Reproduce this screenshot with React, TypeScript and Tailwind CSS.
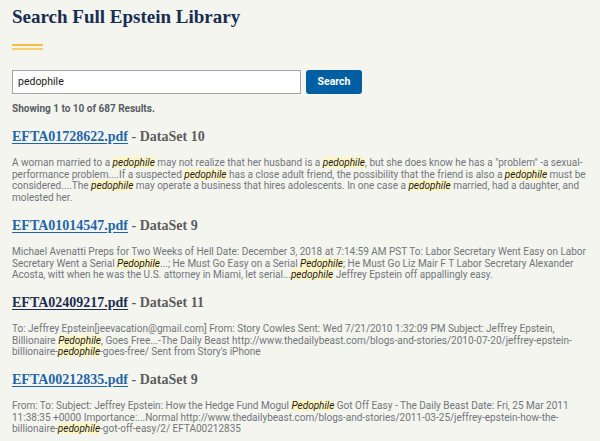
import React from "react";

const serif = { fontFamily: '"Liberation Serif", "Times New Roman", serif' };

function Hl({ children }: { children: React.ReactNode }) {
  return <em className="bg-[#fff6c6] text-[#1b1b1b] italic">{children}</em>;
}

type Result = {
  file: string;
  set: string;
  visited?: boolean;
  body: React.ReactNode;
};

const results: Result[] = [
  {
    file: "EFTA01728622.pdf",
    set: "DataSet 10",
    body: (
      <>
        A woman married to a <Hl>pedophile</Hl> may not realize that her husband is a <Hl>pedophile</Hl>, but she
        does know he has a "problem" -a sexual-performance problem....If a suspected <Hl>pedophile</Hl> has a close
        adult friend, the possibility that the friend is also a <Hl>pedophile</Hl> must be considered....The{" "}
        <Hl>pedophile</Hl> may operate a business that hires adolescents. In one case a <Hl>pedophile</Hl> married,
        had a daughter, and molested her.
      </>
    ),
  },
  {
    file: "EFTA01014547.pdf",
    set: "DataSet 9",
    body: (
      <>
        Michael Avenatti Preps for Two Weeks of Hell Date: December 3, 2018 at 7:14:59 AM PST To: Labor Secretary
        Went Easy on Labor Secretary Went a Serial <Hl>Pedophile</Hl>...; He Must Go Easy on a Serial{" "}
        <Hl>Pedophile</Hl>; He Must Go Liz Mair F T Labor Secretary Alexander Acosta, witt when he was the U.S.
        attorney in Miami, let serial...<Hl>pedophile</Hl> Jeffrey Epstein off appallingly easy.
      </>
    ),
  },
  {
    file: "EFTA02409217.pdf",
    set: "DataSet 11",
    visited: true,
    body: (
      <>
        To: Jeffrey Epstein[jeevacation@gmail.com] From: Story Cowles Sent: Wed 7/21/2010 1:32:09 PM Subject:
        Jeffrey Epstein, Billionaire <Hl>Pedophile</Hl>, Goes Free...-The Daily Beast
        http://www.thedailybeast.com/blogs-and-stories/2010-07-20/jeffrey-epstein-billionaire-<Hl>pedophile</Hl>
        -goes-free/ Sent from Story's iPhone
      </>
    ),
  },
  {
    file: "EFTA00212835.pdf",
    set: "DataSet 9",
    body: (
      <>
        From: To: Subject: Jeffrey Epstein: How the Hedge Fund Mogul <Hl>Pedophile</Hl> Got Off Easy - The Daily
        Beast Date: Fri, 25 Mar 2011 11:38:35 +0000 Importance:...Normal
        http://www.thedailybeast.com/blogs-and-stories/2011-03-25/jeffrey-epstein-how-the-billionaire-
        <Hl>pedophile</Hl>-got-off-easy/2/ EFTA00212835
      </>
    ),
  },
];

export default function App() {
  return (
    <div
      className="min-h-screen w-full bg-[#f5f5f0] px-3 pt-[5px] pb-4"
      style={{ fontFamily: 'Roboto, "Liberation Sans", Arial, sans-serif' }}
    >
      <h1 className="text-[19px] leading-[24px] font-bold text-[#162e51]" style={serif}>
        Search Full Epstein Library
      </h1>
      <div className="mt-[15px] flex flex-col gap-[2px] w-[31px]">
        <div className="h-[2px] bg-[#f2c044]" />
        <div className="h-[2px] bg-[#f7cf6f]" />
      </div>
      <div className="mt-[20px] flex items-center gap-[5px]">
        <div className="h-[24px] w-[289px] border border-[#a3a7aa] bg-white flex items-center px-[5px] text-[10.5px] text-[#1b1b1b]">
          pedophile
        </div>
        <button className="h-[24px] w-[56px] rounded-[3px] bg-[#005ea2] text-white text-[10.5px] font-bold">
          Search
        </button>
      </div>
      <div className="mt-[8px] text-[10px] leading-[14px] font-bold text-[#565c65]">
        Showing 1 to 10 of 687 Results.
      </div>
      <div className="mt-[11px] flex flex-col gap-[12px]">
        {results.map((r) => (
          <div key={r.file}>
            <div className="text-[14px] leading-[20px] font-bold" style={serif}>
              <a
                href="#"
                className={
                  r.visited
                    ? "text-[#1c2d4f] underline underline-offset-[2px]"
                    : "text-[#1f66a8] underline underline-offset-[2px]"
                }
              >
                {r.file}
              </a>
              <span className="text-[#5c5c5c]"> - {r.set}</span>
            </div>
            <p className="mt-[10px] text-[10px] leading-[11.7px] text-[#71767a]">{r.body}</p>
          </div>
        ))}
      </div>
    </div>
  );
}
